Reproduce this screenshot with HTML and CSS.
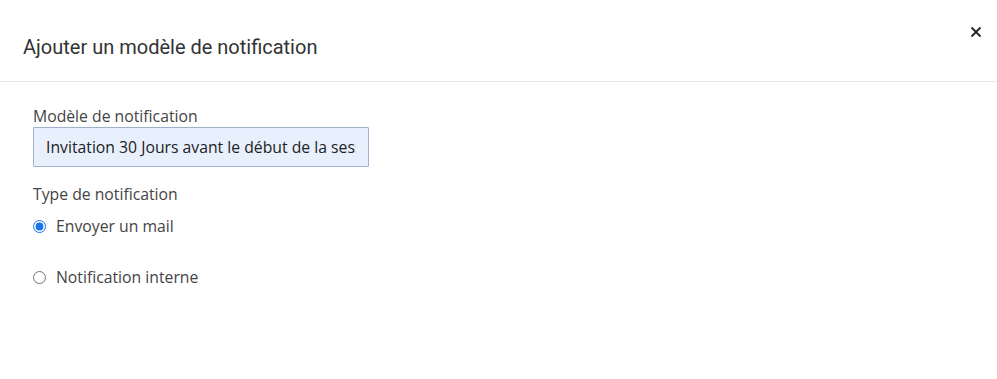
FILE: index.html
```html
<!DOCTYPE html>
<html lang="fr">
<head>
  <meta charset="UTF-8">
  <meta name="viewport" content="width=device-width, initial-scale=1.0">
  <title>Ajouter un modèle de notification</title>
  <link rel="stylesheet" href="styles.css">
</head>
<body>
  <div class="modal">
    <div class="modal-header">
      <h4 class="modal-title">Ajouter un modèle de notification</h4>
      <button class="close" aria-label="Fermer">
        <svg width="12" height="12" viewBox="0 0 12 12">
          <path d="M1.5 1.5 L10.5 10.5 M10.5 1.5 L1.5 10.5" stroke="#222" stroke-width="1.8" fill="none"/>
        </svg>
      </button>
    </div>
    <div class="modal-body">
      <label class="field-label" for="template">Modèle de notification</label>
      <input type="text" id="template" class="field-input" value="Invitation 30 Jours avant le début de la session">

      <div class="field-label type-label">Type de notification</div>
      <label class="radio">
        <input type="radio" name="type" checked>
        <span>Envoyer un mail</span>
      </label>
      <label class="radio">
        <input type="radio" name="type">
        <span>Notification interne</span>
      </label>
    </div>
  </div>
</body>
</html>
```

FILE: styles.css
```css
body {
  margin: 0;
  background-color: #fff;
  font-family: 'Open Sans', sans-serif;
  color: #333;
}
.modal {
  width: 997px;
  height: 379px;
  background-color: #fff;
}
.modal-header {
  display: flex;
  justify-content: space-between;
  align-items: flex-start;
  height: 82px;
  border-bottom: 1px solid #e9e9e9;
  padding: 0 14px 0 23px;
  box-sizing: border-box;
}
.modal-title {
  margin: 0;
  padding-top: 35px;
  font-family: 'Roboto', sans-serif;
  font-weight: 400;
  font-size: 20px;
  line-height: 24px;
  color: #333;
}
.close {
  margin-top: 25px;
  padding: 0;
  width: 14px;
  height: 14px;
  background: none;
  border: none;
  cursor: pointer;
  display: flex;
  align-items: center;
  justify-content: center;
}
.modal-body {
  padding: 23px 33px;
  display: flex;
  flex-direction: column;
  align-items: flex-start;
}
.field-label {
  font-size: 15.75px;
  line-height: 22px;
  color: #444;
}
.field-input {
  width: 336px;
  height: 40px;
  box-sizing: border-box;
  padding: 0 12px;
  background-color: #e8f0fe;
  border: 1px solid #9fb0c8;
  border-radius: 1px;
  font-family: 'Open Sans', sans-serif;
  font-size: 15.75px;
  color: #222;
}
.type-label {
  margin-top: 16px;
}
.radio {
  display: flex;
  align-items: center;
  gap: 10px;
  font-size: 15.75px;
  color: #444;
  height: 24px;
  margin-top: 9px;
}
.radio + .radio {
  margin-top: 27px;
}
.radio input {
  margin: 0;
  width: 13px;
  height: 13px;
  accent-color: #1a73e8;
}
```
